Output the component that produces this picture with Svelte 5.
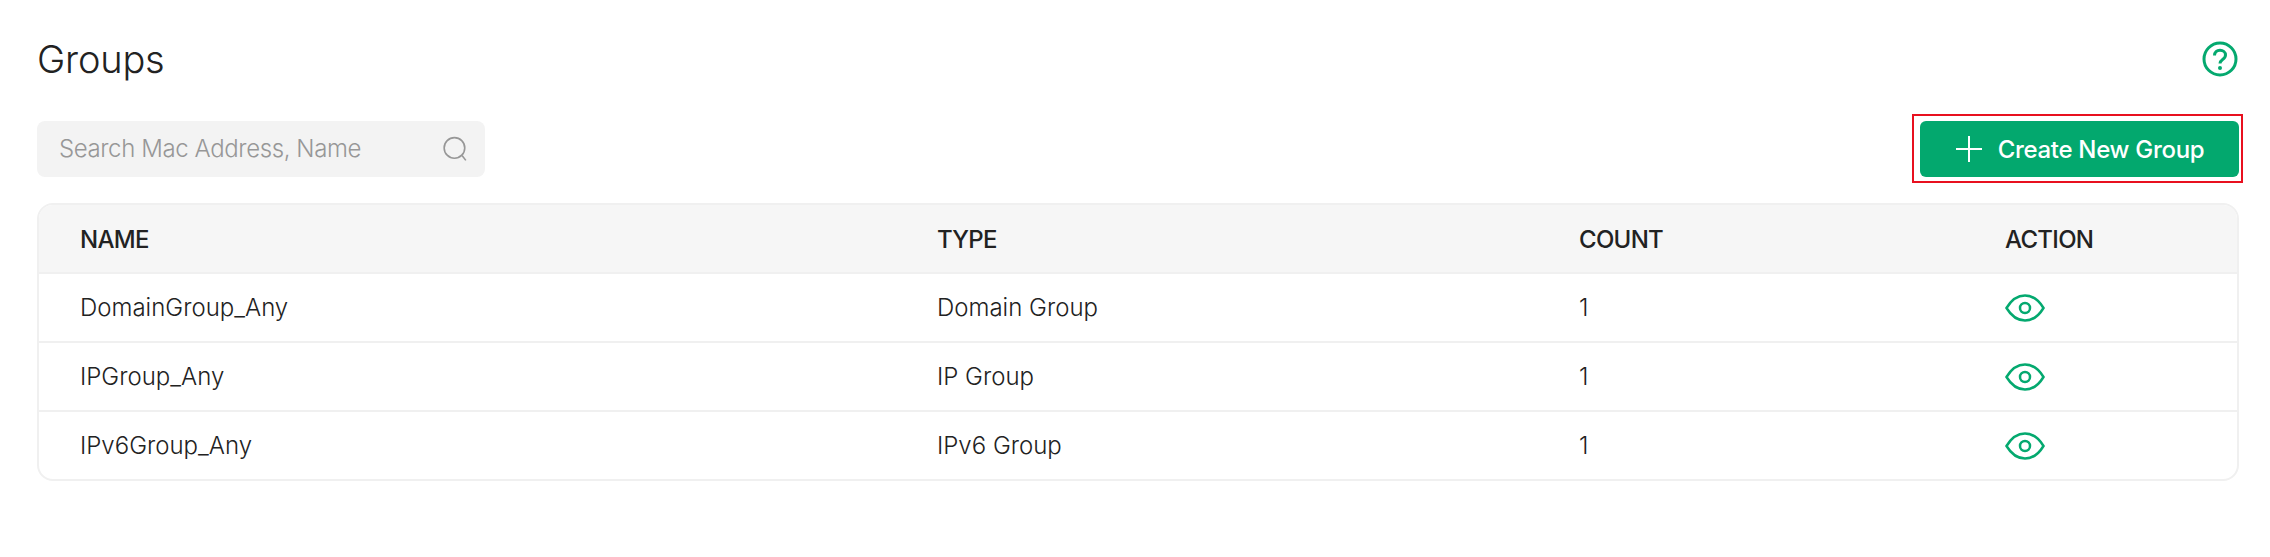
<script>
  const rows = [
    { name: 'DomainGroup_Any', type: 'Domain Group', count: 1 },
    { name: 'IPGroup_Any', type: 'IP Group', count: 1 },
    { name: 'IPv6Group_Any', type: 'IPv6 Group', count: 1 }
  ];
</script>

<div class="page">
  <header class="head">
    <h1>Groups</h1>
    <svg class="help" viewBox="0 0 36 36" aria-hidden="true">
      <circle cx="18" cy="18" r="16" />
      <path d="M12.5 14.5c0-3.2 2.4-5.300 5.500-5.300s5.500 2 5.500 4.800c0 2.300-1.300 3.400-2.900 4.500-1.700 1.200-2.600 2-2.600 4.100" />
      <circle class="dot" cx="18" cy="27" r="2" />
    </svg>
  </header>

  <div class="tools">
    <div class="search">
      <span>Search Mac Address, Name</span>
      <svg viewBox="0 0 24 24" aria-hidden="true">
        <circle cx="11.500" cy="11" r="9.500" />
        <path d="M18.500 18l3.500 4.500" />
      </svg>
    </div>
    <div class="mark">
      <button type="button">
        <svg viewBox="0 0 28 28" aria-hidden="true"><path d="M14 1v26M1 14h26" /></svg>
        Create New Group
      </button>
    </div>
  </div>

  <div class="table">
    <div class="row top">
      <div>NAME</div><div>TYPE</div><div>COUNT</div><div>ACTION</div>
    </div>
    {#each rows as r}
      <div class="row">
        <div>{r.name}</div>
        <div>{r.type}</div>
        <div>{r.count}</div>
        <div class="act">
          <svg viewBox="0 0 40 28" aria-hidden="true">
            <path d="M1.500 14C6 6.500 12.500 1.500 20 1.500S34 6.500 38.500 14C34 21.500 27.500 26.500 20 26.500S6 21.500 1.500 14Z" />
            <circle cx="20" cy="14" r="5" />
          </svg>
        </div>
      </div>
    {/each}
  </div>
</div>

<style>
  :global(body) {
    margin: 0;
    background: #fff;
    font-family: Inter, "Liberation Sans", sans-serif;
    color: #222;
  }
  .page {
    padding: 30px 31px 0 37px;
  }
  .head {
    display: flex;
    justify-content: space-between;
    align-items: center;
    height: 58px;
  }
  h1 {
    margin: 0;
    font-size: 38px;
    font-weight: 300;
    letter-spacing: -0.2px;
  }
  .help {
    width: 36px;
    height: 36px;
    margin-right: 1px;
    fill: none;
    stroke: #04a96f;
    stroke-width: 3;
  }
  .dot {
    fill: #04a96f;
    stroke: none;
  }
  .tools {
    display: flex;
    justify-content: space-between;
    align-items: center;
    margin-top: 26px;
    margin-right: -4px;
  }
  .search {
    width: 448px;
    height: 56px;
    box-sizing: border-box;
    padding: 0 17px 0 22px;
    display: flex;
    align-items: center;
    justify-content: space-between;
    background: #f3f3f3;
    border-radius: 8px;
    color: #979797;
    font-size: 24px;
    font-weight: 300;
    letter-spacing: -0.4px;
  }
  .search svg {
    width: 26px;
    height: 28px;
    fill: none;
    stroke: #979797;
    stroke-width: 1.500;
  }
  .mark {
    border: 2px solid #e8101f;
    padding: 5px 2px 4px 6px;
  }
  button {
    width: 319px;
    height: 56px;
    display: flex;
    align-items: center;
    justify-content: center;
    gap: 15px;
    padding: 0;
    border: 0;
    border-radius: 6px;
    background: #03a86e;
    color: #fff;
    font: 500 24px Inter, "Liberation Sans", sans-serif;
    letter-spacing: -0.3px;
  }
  button svg {
    width: 28px;
    height: 28px;
    fill: none;
    stroke: #fff;
    stroke-width: 2;
  }
  .table {
    margin-top: 20px;
    border: 2px solid #f0f0f0;
    border-radius: 16px;
    overflow: hidden;
  }
  .row {
    display: grid;
    grid-template-columns: 857px 642px 426px 1fr;
    align-items: center;
    height: 67px;
    padding-left: 41px;
    border-top: 2px solid #f0f0f0;
    font-size: 24px;
    font-weight: 300;
    letter-spacing: 0;
  }
  .row.top {
    height: 67px;
    border-top: 0;
    background: #f6f6f6;
    font-weight: 500;
    letter-spacing: -0.7px;
    padding-top: 1px;
    box-sizing: border-box;
  }
  .act {
    display: flex;
  }
  .act svg {
    width: 40px;
    height: 28px;
    fill: none;
    stroke: #04a96f;
    stroke-width: 2.500;
  }
</style>
